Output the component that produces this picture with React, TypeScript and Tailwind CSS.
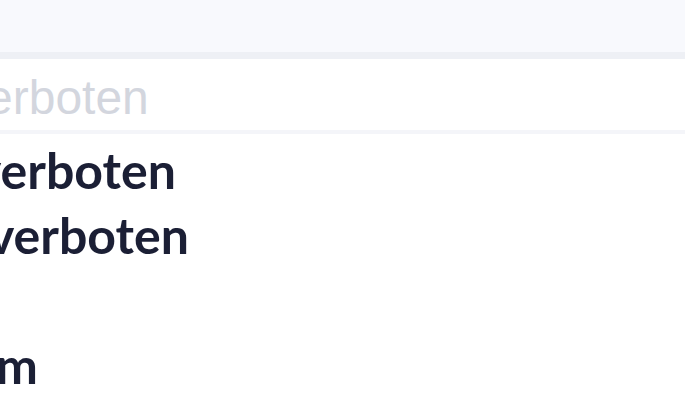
export default function App() {
  const items = [
    { label: "verboten", shift: "ml-[-25px]" },
    { label: "verboten", shift: "ml-[-12px]" },
    { label: "", shift: "" },
    { label: "m", shift: "ml-[-4px]" },
  ];

  return (
    <div
      className="h-[410px] w-[685px] overflow-hidden bg-white"
      style={{ fontFamily: '"Lato", "Liberation Sans", sans-serif' }}
    >
      <div className="h-[52px] bg-[#f8f9fd]" />
      <div className="h-[7px] bg-[#eef0f5]" />
      <div className="flex h-[75px] items-center overflow-hidden border-b-4 border-[#f4f5f9] pt-[6px]">
        <span
          className="ml-[-14px] whitespace-nowrap text-[48px] text-[#d3d6de]"
          style={{ fontFamily: '"Liberation Sans", sans-serif' }}
        >
          erboten
        </span>
      </div>
      <ul className="overflow-hidden pt-[4px]">
        {items.map((item, i) => (
          <li key={i} className="h-[65px] overflow-hidden whitespace-nowrap text-[50px] leading-[65px] font-bold text-[#1b1f35]">
            <span className={item.shift}>{item.label}</span>
          </li>
        ))}
      </ul>
    </div>
  );
}
